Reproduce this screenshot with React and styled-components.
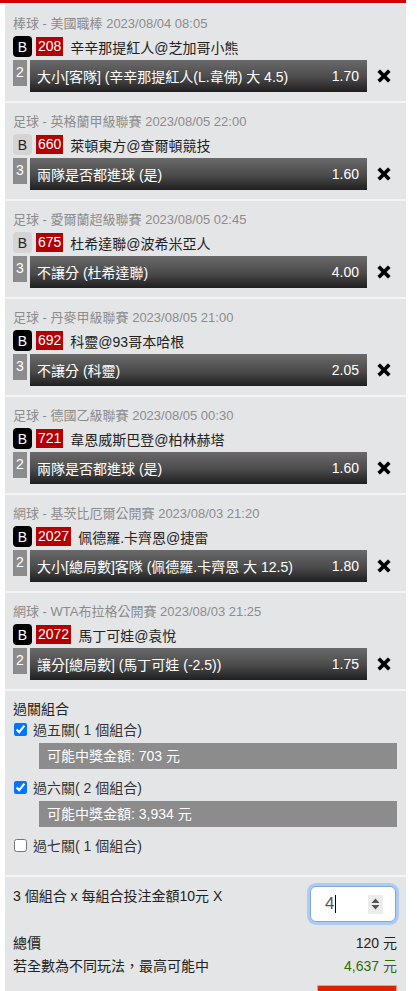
import React from "react";
import styled, { createGlobalStyle } from "styled-components";

const GlobalStyle = createGlobalStyle`
  body {
    margin: 0;
    background: #fff;
    font-family: "Liberation Sans", Arial, "Noto Sans CJK TC", sans-serif;
  }
`;

const bets = [
  { head: "棒球 - 美國職棒 2023/08/04 08:05", side: "dark", code: "208", teams: "辛辛那提紅人@芝加哥小熊", num: 2, pick: "大小[客隊] (辛辛那提紅人(L.韋佛) 大 4.5)", odds: "1.70" },
  { head: "足球 - 英格蘭甲級聯賽 2023/08/05 22:00", side: "light", code: "660", teams: "萊頓東方@查爾頓競技", num: 3, pick: "兩隊是否都進球 (是)", odds: "1.60" },
  { head: "足球 - 愛爾蘭超級聯賽 2023/08/05 02:45", side: "light", code: "675", teams: "杜希達聯@波希米亞人", num: 3, pick: "不讓分 (杜希達聯)", odds: "4.00" },
  { head: "足球 - 丹麥甲級聯賽 2023/08/05 21:00", side: "dark", code: "692", teams: "科靈@93哥本哈根", num: 3, pick: "不讓分 (科靈)", odds: "2.05" },
  { head: "足球 - 德國乙級聯賽 2023/08/05 00:30", side: "dark", code: "721", teams: "韋恩威斯巴登@柏林赫塔", num: 2, pick: "兩隊是否都進球 (是)", odds: "1.60" },
  { head: "網球 - 基茨比厄爾公開賽 2023/08/03 21:20", side: "dark", code: "2027", teams: "佩德羅.卡齊恩@捷雷", num: 2, pick: "大小[總局數]客隊 (佩德羅.卡齊恩 大 12.5)", odds: "1.80" },
  { head: "網球 - WTA布拉格公開賽 2023/08/03 21:25", side: "dark", code: "2072", teams: "馬丁可娃@袁悅", num: 2, pick: "讓分[總局數] (馬丁可娃 (-2.5))", odds: "1.75" },
];

const combos = [
  { label: "過五關( 1 個組合)", checked: true, win: "可能中獎金額: 703 元" },
  { label: "過六關( 2 個組合)", checked: true, win: "可能中獎金額: 3,934 元" },
  { label: "過七關( 1 個組合)", checked: false },
];

const TopBar = styled.div`
  width: 406px;
  height: 3px;
  background: #d40000;
`;

const Panel = styled.div`
  margin-left: 5px;
  width: 401px;
  min-height: 988px;
  background: #e4e5e7;
`;

const Section = styled.div`
  border-top: 2px solid #f4f4f5;
  padding: 9px 9px 9px 8px;
`;

const Head = styled.div`
  font-size: 13px;
  line-height: 20px;
  height: 20px;
  color: #8c8c8c;
  white-space: nowrap;
`;

const GameRow = styled.div`
  display: flex;
  align-items: center;
  height: 21px;
  margin-top: 2px;
  font-size: 14px;
`;

const Side = styled.span`
  width: 19px;
  height: 21px;
  border-radius: 4px;
  background: ${(p) => (p.$light ? "#d4d4d5" : "#000")};
  color: ${(p) => (p.$light ? "#222" : "#fff")};
  display: flex;
  align-items: center;
  justify-content: center;
`;

const Code = styled.span`
  margin-left: 4px;
  height: 19px;
  line-height: 19px;
  padding: 0 2px;
  background: #b40000;
  color: #fff;
`;

const Teams = styled.span`
  margin-left: 7px;
  color: #222;
  white-space: nowrap;
`;

const BetRow = styled.div`
  display: flex;
  align-items: flex-start;
  margin-top: 3px;
  height: 32px;
  font-size: 14px;
`;

const Num = styled.span`
  width: 14px;
  height: 26px;
  line-height: 24px;
  text-align: center;
  background: #8c8c8c;
  color: #fff;
`;

const Bar = styled.div`
  margin-left: 3px;
  width: 337px;
  height: 32px;
  box-sizing: border-box;
  padding: 0 8px 0 7px;
  display: flex;
  align-items: center;
  justify-content: space-between;
  color: #fff;
  white-space: nowrap;
  background: linear-gradient(to bottom, #6a6a6a 0%, #4a4a4a 55%, #1f1f1f 100%);
`;

const Close = styled.span`
  margin-left: 10px;
  height: 32px;
  display: flex;
  align-items: center;
`;

const Title = styled.div`
  font-size: 14px;
  line-height: 20px;
  color: #222;
`;

const Check = styled.label`
  display: flex;
  align-items: center;
  height: 20px;
  font-size: 14px;
  color: #333;

  input {
    margin: 0 6px 0 1px;
    width: 13px;
    height: 13px;
  }
`;

const Win = styled.div`
  margin: 4px 0 8px 26px;
  height: 26px;
  line-height: 26px;
  padding-left: 8px;
  background: #8c8c8c;
  color: #fff;
  font-size: 14px;
`;

const ComboSection = styled(Section)`
  padding: 8px 9px 20px 8px;
`;

const FooterSection = styled(Section)`
  padding: 9px 9px 0 8px;
  font-size: 14px;
  color: #222;
`;

const StakeRow = styled.div`
  display: flex;
  justify-content: space-between;
  align-items: flex-start;
  line-height: 20px;
`;

const Stake = styled.div`
  width: 86px;
  height: 36px;
  margin-right: 1px;
  box-sizing: border-box;
  border: 1px solid #7aa7e0;
  border-radius: 6px;
  background: #fff;
  box-shadow: 0 0 0 3px #aecbf2;
  display: flex;
  align-items: center;
  padding-left: 14px;
  font-size: 17px;
  color: #555;
`;

const Caret = styled.span`
  width: 1px;
  height: 18px;
  background: #000;
  margin-left: 1px;
`;

const Spin = styled.span`
  margin-left: auto;
  margin-right: 12px;
  width: 15px;
  height: 19px;
  background: #ececec;
  display: flex;
  align-items: center;
  justify-content: center;
`;

const SumRow = styled.div`
  display: flex;
  justify-content: space-between;
  line-height: 23px;
  height: 23px;
`;

const Green = styled.span`
  color: #2f6b05;
`;

const FirstSum = styled(SumRow)`
  margin-top: 10px;
`;

const Submit = styled.div`
  margin: 7px 0 0 auto;
  width: 80px;
  height: 30px;
  box-sizing: border-box;
  background: #dc2200;
  border: 1px solid #f29a8a;
`;

const XIcon = () => (
  <svg width="14" height="14" viewBox="0 0 14 14">
    <path
      d="M3 0.8 L7 4.8 L11 0.8 L13.2 3 L9.2 7 L13.2 11 L11 13.2 L7 9.2 L3 13.2 L0.8 11 L4.8 7 L0.8 3 Z"
      fill="#000"
      stroke="#000"
      strokeWidth="0.8"
      strokeLinejoin="round"
    />
  </svg>
);

const SpinIcon = () => (
  <svg width="9" height="12" viewBox="0 0 9 12">
    <path d="M4.5 0.5 L8.5 5 L0.5 5 Z" fill="#555" />
    <path d="M0.5 7 L8.5 7 L4.5 11.5 Z" fill="#555" />
  </svg>
);

export default function App() {
  return (
    <>
      <GlobalStyle />
      <TopBar />
      <Panel>
        {bets.map((b) => (
          <Section key={b.code}>
            <Head>{b.head}</Head>
            <GameRow>
              <Side $light={b.side === "light"}>B</Side>
              <Code>{b.code}</Code>
              <Teams>{b.teams}</Teams>
            </GameRow>
            <BetRow>
              <Num>{b.num}</Num>
              <Bar>
                <span>{b.pick}</span>
                <span>{b.odds}</span>
              </Bar>
              <Close>
                <XIcon />
              </Close>
            </BetRow>
          </Section>
        ))}
        <ComboSection>
          <Title>過關組合</Title>
          {combos.map((c) => (
            <React.Fragment key={c.label}>
              <Check>
                <input type="checkbox" defaultChecked={c.checked} />
                {c.label}
              </Check>
              {c.win && <Win>{c.win}</Win>}
            </React.Fragment>
          ))}
        </ComboSection>
        <FooterSection>
          <StakeRow>
            <span>3 個組合 x 每組合投注金額10元 X</span>
            <Stake>
              <span>4</span>
              <Caret />
              <Spin>
                <SpinIcon />
              </Spin>
            </Stake>
          </StakeRow>
          <FirstSum>
            <span>總價</span>
            <span>120 元</span>
          </FirstSum>
          <SumRow>
            <span>若全數為不同玩法，最高可能中</span>
            <Green>4,637 元</Green>
          </SumRow>
          <Submit />
        </FooterSection>
      </Panel>
    </>
  );
}
